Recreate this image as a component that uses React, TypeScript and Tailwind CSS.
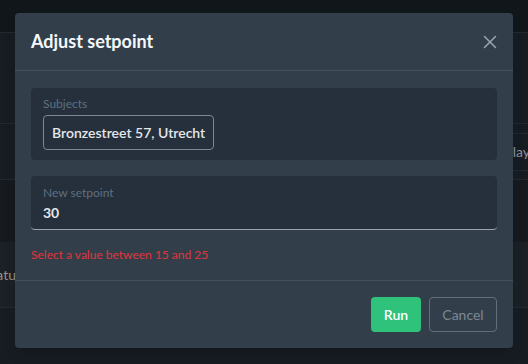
import { X } from 'lucide-react'

const font = { fontFamily: 'Lato, "Open Sans", sans-serif' }

function Backdrop() {
  return (
    <div className="flex h-[364px] flex-col bg-[#171c22]">
      <div className="h-[33px] shrink-0 border-b border-[#222930] bg-[#11161b]" />
      <div className="h-[91px] shrink-0 border-b border-[#222930]" />
      <div className="flex h-[56px] shrink-0 border-b border-[#222930]">
        <div className="flex-1" />
        <div className="mt-[9px] flex h-[38px] w-[40px] items-center overflow-hidden whitespace-nowrap border-y border-[#222930] text-sm text-[#8b939c]">
          <span className="-ml-[3px]">Display</span>
        </div>
      </div>
      <div className="h-[62px] shrink-0 bg-[#161a1f]" />
      <div className="flex h-[66px] shrink-0 items-center border-b border-[#222930] bg-[#1b2026] text-sm text-[#9a9288]">
        <span className="-ml-[16px]">Status</span>
      </div>
      <div className="flex-1" />
    </div>
  )
}

export default function App() {
  return (
    <div className="relative h-[364px] w-[528px] overflow-hidden" style={font}>
      <Backdrop />
      <div className="absolute left-[15px] top-[13px] w-[498px] rounded-[4px] bg-[#323f4b] shadow-lg">
        <div className="flex h-[58px] items-center justify-between border-b border-[#435160] px-4">
          <h2 className="text-[18px] font-bold text-[#f5f7fa]">Adjust setpoint</h2>
          <button aria-label="Close" className="mr-[-4px] text-[#9aa5b1]">
            <X size={22} strokeWidth={1.6} />
          </button>
        </div>

        <div className="flex flex-col px-4 pb-[17px] pt-[17px]">
          <div className="flex h-[72px] flex-col rounded-[4px] bg-[#25303c] px-3 pt-[8px]">
            <label className="text-[12px] leading-4 text-[#5f6f7f]">Subjects</label>
            <div className="mt-[3px] flex h-[35px] self-start items-center rounded-[4px] border border-[#7b8794] px-[8px] text-[14px] font-semibold text-[#e4e7eb]">
              Bronzestreet 57, Utrecht
            </div>
          </div>

          <div className="mt-4 flex h-[54px] flex-col rounded-[4px] border-b border-[#9aa5b1] bg-[#25303c] px-3 pt-[9px]">
            <label className="text-[12px] leading-4 text-[#5f6f7f]">New setpoint</label>
            <input
              readOnly
              value="30"
              className="mt-[2px] bg-transparent text-[14px] font-bold leading-5 text-[#e4e7eb] outline-none"
            />
          </div>

          <p className="mt-[17px] text-[12px] leading-4 text-[#e0353b]">Select a value between 15 and 25</p>
        </div>

        <div className="flex justify-end gap-2 border-t border-[#435160] px-4 py-4">
          <button className="h-[35px] w-[50px] rounded-[4px] bg-[#2ec27b] text-[14px] font-semibold text-white">
            Run
          </button>
          <button className="h-[35px] w-[68px] rounded-[4px] border border-[#616e7c] text-[14px] text-[#7b8794]">
            Cancel
          </button>
        </div>
      </div>
    </div>
  )
}
